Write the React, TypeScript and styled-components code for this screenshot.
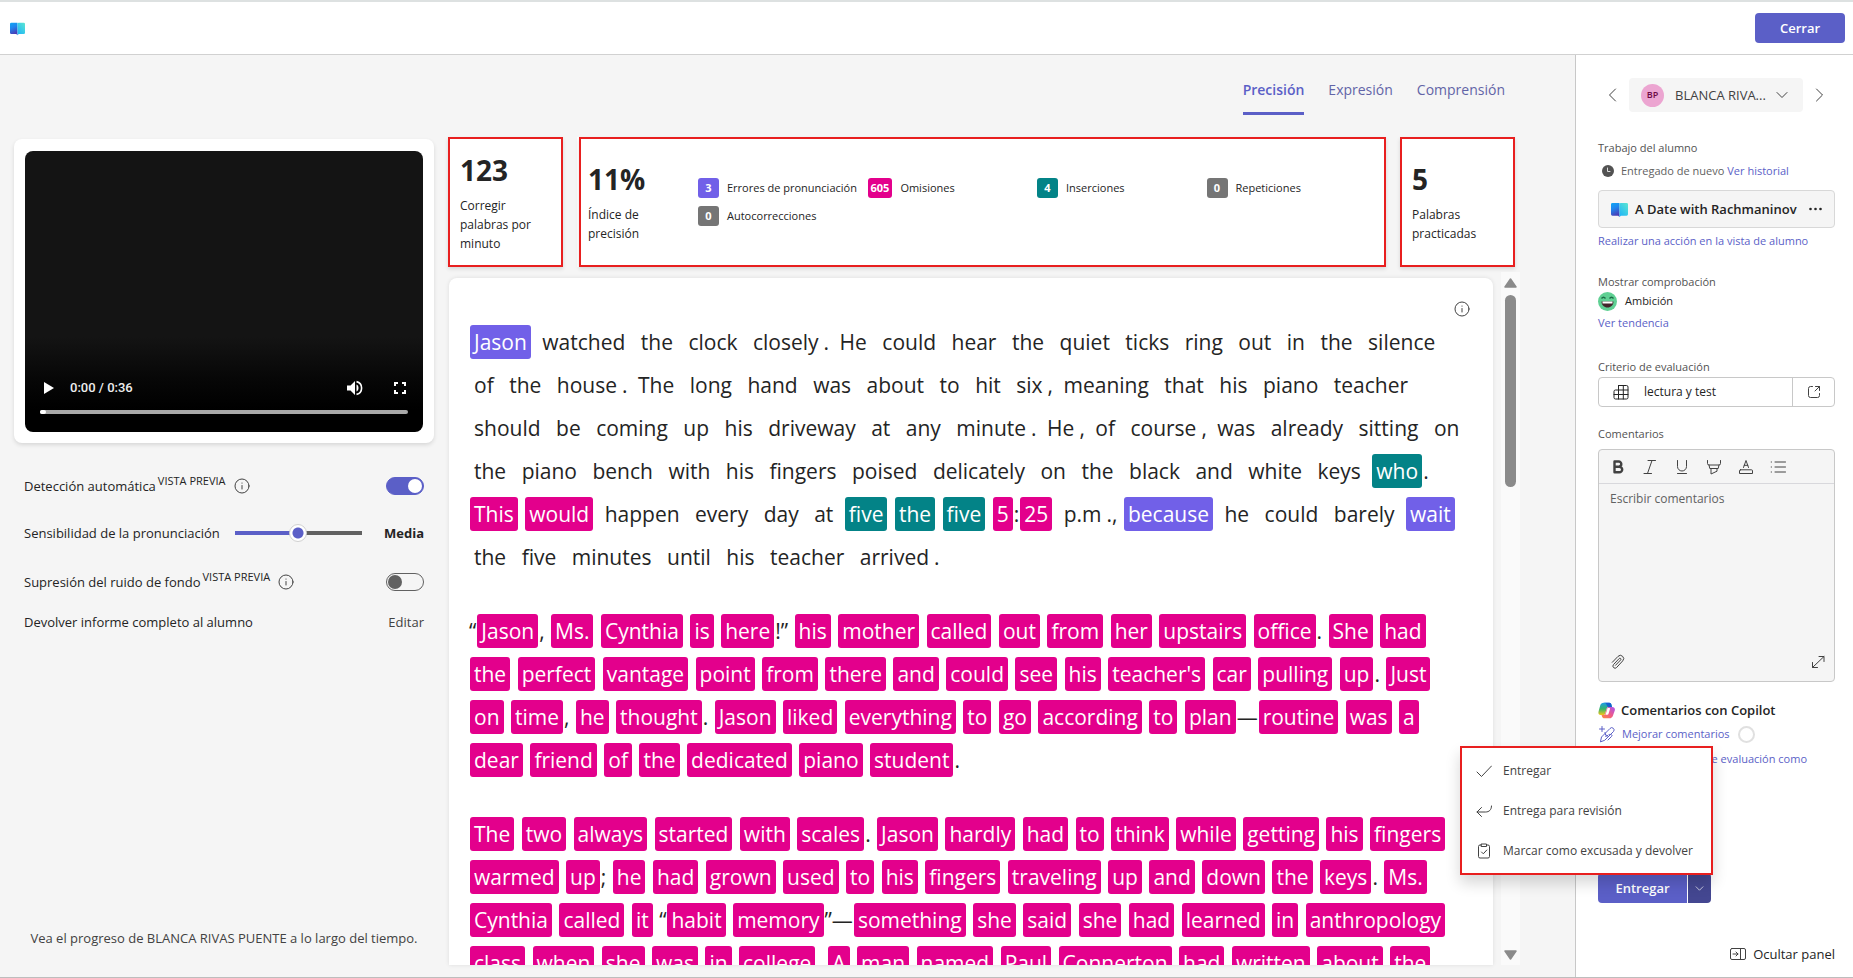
import React from "react";
import styled, { createGlobalStyle, css } from "styled-components";

const GlobalStyle = createGlobalStyle`
  *, *::before, *::after { box-sizing: border-box; }
  body {
    margin: 0;
    background: #f5f5f5;
    color: #242424;
    font-family: "Open Sans", "Noto Sans", sans-serif;
    font-size: 13px;
    line-height: 18px;
  }
  button, input, select, textarea { font: inherit; color: inherit; }
  button { border: 0; padding: 0; background: none; cursor: pointer; }
  a { color: #5b5fc7; text-decoration: none; }
  h2, p { margin: 0; font: inherit; }
  svg { display: block; flex: none; }
`;

const brand = "#5b5fc7";
const red = "#e81f1f";
const tones = { omission: "#e3008c", mispronounced: "#7160e8", insertion: "#038387", neutral: "#757575" };
type Tone = keyof typeof tones;

/* ---------- page frame ---------- */

const Page = styled.div`
  display: flex;
  flex-direction: column;
  height: 100vh;
  border-top: 2px solid #dde1e1;
  border-bottom: 1px solid #bdbdbd;
`;

const TopBar = styled.header`
  display: flex;
  flex: none;
  align-items: center;
  justify-content: space-between;
  height: 53px;
  padding: 0 8px 0 10px;
  background: #fff;
  border-bottom: 1px solid #d1d1d1;
`;

const PrimaryButton = styled.button`
  height: 30px;
  min-width: 90px;
  border-radius: 4px;
  background: ${brand};
  color: #fff;
  font-weight: 600;
`;

const Body = styled.div`
  display: flex;
  flex: 1;
  min-height: 0;
`;

const Main = styled.main`
  display: flex;
  flex: 1;
  flex-direction: column;
  min-width: 0;
  padding: 0 55px 12px 14px;
`;

const Tabs = styled.nav`
  display: flex;
  flex: none;
  justify-content: flex-end;
  gap: 24px;
  height: 81px;
  padding: 24px 15px 0 0;
`;

const Tab = styled.button<{ $active?: boolean }>`
  height: 36px;
  padding-bottom: 11px;
  border-bottom: 3px solid ${(p) => (p.$active ? brand : "transparent")};
  color: ${(p) => (p.$active ? brand : "#6264a7")};
  font-size: 14px;
  font-weight: ${(p) => (p.$active ? 600 : 400)};
`;

const Columns = styled.div`
  display: flex;
  flex: 1;
  gap: 14px;
  min-height: 0;
`;

/* ---------- player and settings ---------- */

const LeftColumn = styled.section`
  display: flex;
  flex: none;
  flex-direction: column;
  width: 420px;
  padding-top: 3px;
`;

const PlayerCard = styled.div`
  padding: 12px 11px 11px;
  border-radius: 8px;
  background: #fff;
  box-shadow: 0 2px 4px rgba(0, 0, 0, 0.12);
`;

const Player = styled.div`
  display: flex;
  flex-direction: column;
  justify-content: flex-end;
  height: 281px;
  padding: 0 15px 18px;
  border-radius: 8px;
  background: linear-gradient(#141414 0, #141414 66%, #060606 82%, #000 92%);
  color: #fff;
`;

const PlayerControls = styled.div`
  display: flex;
  align-items: center;
  height: 32px;
  margin-bottom: 6px;
  padding: 0 2px 0 4px;
  font-family: Roboto, sans-serif;
  font-size: 13px;
`;

const PlayerTime = styled.span`
  flex: 1;
  margin-left: 16px;
  font-weight: 500;
  color: #eee;
`;

const FullscreenButton = styled.button`
  margin-left: 31px;
`;

const ProgressTrack = styled.div`
  height: 4px;
  border-radius: 2px;
  background: #a9a9a9;
`;

const ProgressFill = styled.div`
  width: 6px;
  height: 4px;
  border-radius: 2px;
  background: #fff;
`;

const Settings = styled.div`
  flex: 1;
  padding: 20px 10px 0;
`;

const SettingRow = styled.div<{ $height: number }>`
  display: flex;
  align-items: center;
  justify-content: space-between;
  height: ${(p) => p.$height}px;
`;

const SettingLabel = styled.label`
  display: flex;
  align-items: center;
  font-weight: 500;
`;

const Preview = styled.span`
  margin: 0 8px 10px 2px;
  font-size: 11px;
  font-weight: 400;
`;

const Switch = styled.input`
  display: flex;
  align-items: center;
  width: 38px;
  height: 18px;
  margin: 0;
  padding: 0 1px;
  appearance: none;
  border: 1px solid #616161;
  border-radius: 9px;
  &::before {
    content: "";
    width: 14px;
    height: 14px;
    border-radius: 50%;
    background: #616161;
  }
  &:checked { justify-content: flex-end; background: ${brand}; border-color: ${brand}; }
  &:checked::before { background: #fff; }
`;

const SliderInput = styled.input`
  width: 127px;
  height: 20px;
  margin: 0 7px 0 0;
  appearance: none;
  background: linear-gradient(90deg, ${brand} 50%, #616161 50%) center / 100% 4px no-repeat;
  &::-webkit-slider-thumb {
    width: 18px;
    height: 18px;
    appearance: none;
    border: 1px solid #d1d1d1;
    border-radius: 50%;
    background: radial-gradient(circle, ${brand} 0 5px, #fff 6px);
  }
`;

const SliderValue = styled.output`
  font-weight: 700;
`;

const TextButton = styled.button`
  color: #424242;
`;

const ProgressNote = styled.p`
  padding-bottom: 18px;
  color: #424242;
  text-align: center;
`;

/* ---------- statistics ---------- */

const Center = styled.section`
  display: flex;
  flex: 1;
  flex-direction: column;
  min-width: 0;
`;

const Stats = styled.div`
  display: flex;
  flex: none;
  height: 136px;
  align-items: flex-start;
  justify-content: space-between;
  padding: 1px 5px 0 0;
`;

const StatCard = styled.div<{ $wide?: boolean }>`
  display: flex;
  align-items: center;
  flex: ${(p) => (p.$wide ? "1" : "none")};
  width: 115px;
  height: 130px;
  margin: ${(p) => (p.$wide ? "0 14px 0 16px" : "0")};
  padding: 0 ${(p) => (p.$wide ? 7 : 10)}px;
  border: 2px solid ${red};
  background: #fff;
  box-shadow: 0 2px 4px rgba(0, 0, 0, 0.12)${(p) => (p.$wide ? ", -2px 0 0 #fff" : "")};
`;

const Metric = styled.div`
  width: 84px;
  flex: none;
`;

const MetricValue = styled.div`
  margin-bottom: 8px;
  font-size: 28px;
  font-weight: 700;
  line-height: 36px;
`;

const MetricLabel = styled.div`
  font-size: 12px;
  line-height: 19px;
`;

const ErrorGrid = styled.div`
  display: grid;
  flex: 1;
  grid-template-columns: repeat(4, 1fr);
  row-gap: 8px;
  max-width: 678px;
  margin-left: 26px;
`;

const ErrorItem = styled.div`
  display: flex;
  align-items: center;
  gap: 8px;
  font-size: 11px;
  font-weight: 500;
  white-space: nowrap;
`;

const CountBadge = styled.span<{ $tone: Tone }>`
  min-width: 21px;
  height: 20px;
  padding: 0 3px;
  border-radius: 3px;
  background: ${(p) => tones[p.$tone]};
  color: #fff;
  font-weight: 700;
  line-height: 20px;
  text-align: center;
`;

/* ---------- reading passage ---------- */

const Reader = styled.div`
  display: flex;
  flex: 1;
  gap: 8px;
  min-height: 0;
`;

const Passage = styled.article`
  flex: 1;
  min-width: 0;
  margin: 6px 0 0 1px;
  padding: 23px 20px 0;
  overflow: hidden;
  border-radius: 8px 8px 0 0;
  background: #fff;
  box-shadow: 0 0 4px rgba(0, 0, 0, 0.1);
`;

const PassageTools = styled.div`
  display: flex;
  align-items: flex-start;
  justify-content: flex-end;
  height: 20px;
  padding-right: 3px;
`;

const Paragraph = styled.p`
  margin-bottom: 31px;
  font-size: 21px;
  line-height: 43px;
`;

const Line = styled.span`
  display: block;
  white-space: nowrap;
`;

const Word = styled.span<{ $tone?: Tone }>`
  margin: 0 1px;
  padding: 3px 4px;
  border-radius: 3px;
  ${(p) => p.$tone && css`
    background: ${tones[p.$tone]};
    color: #fff;
  `}
`;

const Scrollbar = styled.div`
  display: flex;
  flex: none;
  flex-direction: column;
  align-items: center;
  justify-content: space-between;
  width: 19px;
  padding: 6px 0 5px;
  background: #fafafa;
`;

const ScrollTrack = styled.div`
  flex: 1;
  padding-top: 7px;
`;

const ScrollThumb = styled.div`
  width: 11px;
  height: 192px;
  border-radius: 6px;
  background: #8b8b8b;
`;

/* ---------- grading panel ---------- */

const Panel = styled.aside`
  display: flex;
  flex: none;
  flex-direction: column;
  width: 278px;
  padding: 23px 18px 14px 22px;
  border-left: 1px solid #c8c8c8;
  background: #fff;
`;

const StudentNav = styled.div`
  display: flex;
  flex: none;
  align-items: center;
  height: 34px;
  padding: 0 8px 0 7px;
  gap: 8px;
`;

const StudentPicker = styled.label`
  display: flex;
  flex: 1;
  align-items: center;
  height: 34px;
  padding: 0 13px 0 12px;
  border-radius: 4px;
  background: #f5f5f5;
`;

const Avatar = styled.span`
  flex: none;
  width: 23px;
  height: 23px;
  margin-right: 11px;
  border-radius: 50%;
  background: #eca5d1;
  color: #6e0845;
  font-size: 9px;
  font-weight: 600;
  line-height: 22px;
  text-align: center;
`;

const StudentSelect = styled.select`
  flex: 1;
  min-width: 0;
  padding: 0;
  appearance: none;
  border: 0;
  background: none;
  color: #424242;
`;

const Group = styled.section<{ $top: number }>`
  display: flex;
  flex: none;
  flex-direction: column;
  margin-top: ${(p) => p.$top}px;
  font-size: 11px;
`;

const GroupTitle = styled.h2`
  color: #525252;
  font-weight: 500;
  line-height: 18px;
`;

const InlineRow = styled.div<{ $height: number; $gap: number }>`
  display: flex;
  align-items: center;
  gap: ${(p) => p.$gap}px;
  height: ${(p) => p.$height}px;
`;

const Muted = styled.span`
  color: #616161;
`;

const WorkItem = styled.div`
  display: flex;
  align-items: center;
  height: 38px;
  margin: 5px 0 4px;
  padding: 0 12px;
  border: 1px solid #d8d8d8;
  border-radius: 4px;
  background: #f5f5f5;
`;

const WorkTitle = styled.span`
  flex: 1;
  margin-left: 7px;
  font-size: 13px;
  font-weight: 600;
  white-space: nowrap;
`;

const Rubric = styled.div`
  display: flex;
  height: 30px;
  margin-top: 1px;
  border: 1px solid #c8c8c8;
  border-radius: 4px;
`;

const RubricName = styled.button`
  display: flex;
  flex: 1;
  align-items: center;
  gap: 15px;
  padding-left: 14px;
  font-size: 12px;
`;

const RubricOpen = styled.button`
  display: grid;
  place-items: center;
  width: 42px;
  border-left: 1px solid #c8c8c8;
`;

const Editor = styled.div`
  display: flex;
  flex-direction: column;
  height: 233px;
  margin-top: 6px;
  border: 1px solid #c8c8c8;
  border-radius: 4px;
  background: #f5f5f5;
`;

const EditorTools = styled.div`
  display: flex;
  flex: none;
  align-items: center;
  gap: 16px;
  height: 34px;
  padding-left: 11px;
  border-bottom: 1px solid #d8d8dc;
`;

const EditorInput = styled.textarea`
  flex: 1;
  min-height: 0;
  padding: 6px 11px;
  border: 0;
  background: none;
  font-size: 12px;
  resize: none;
  &::placeholder { color: #616161; opacity: 1; }
`;

const EditorFooter = styled.div`
  display: flex;
  justify-content: space-between;
  padding: 0 8px 11px 10px;
`;

const CopilotTitle = styled.h2`
  font-size: 13px;
  font-weight: 600;
`;

const Ring = styled.span`
  width: 17px;
  height: 17px;
  margin-left: 2px;
  border: 2px solid #e0e0e0;
  border-radius: 50%;
`;

const RubricLink = styled.a`
  padding: 4px 28px 0 0;
  text-align: right;
`;

const Submit = styled.div`
  position: relative;
  display: flex;
  align-self: flex-start;
  gap: 1px;
  margin: auto 0 42px;
  border-radius: 4px;
`;

const SubmitButton = styled(PrimaryButton)`
  min-width: 89px;
  border-radius: 4px 0 0 4px;
`;

const SubmitToggle = styled.button`
  display: grid;
  place-items: center;
  width: 23px;
  border-radius: 0 4px 4px 0;
  background: #444791;
  color: #fff;
`;

const Menu = styled.div`
  position: absolute;
  right: -2px;
  bottom: 28px;
  display: flex;
  flex-direction: column;
  width: 253px;
  padding: 3px 0 2px;
  border: 2px solid ${red};
  background: #fff;
  box-shadow: 0 8px 14px rgba(0, 0, 0, 0.16);
`;

const MenuItem = styled.button`
  display: flex;
  align-items: center;
  gap: 11px;
  height: 40px;
  padding-left: 14px;
  color: #424242;
  font-size: 12px;
  white-space: nowrap;
`;

const HidePanel = styled.button`
  display: flex;
  align-items: center;
  align-self: flex-end;
  gap: 7px;
  font-weight: 500;
`;

/* ---------- icons ---------- */

type StrokeProps = { size?: number; box?: number; color?: string; width?: number; children: React.ReactNode };

const Stroke = ({ size = 16, box = 16, color = "#424242", width = 1, children }: StrokeProps) => (
  <svg width={size} height={size} viewBox={`0 0 ${box} ${box}`} fill="none" stroke={color} strokeWidth={width}
    strokeLinecap="round" strokeLinejoin="round" aria-hidden="true">{children}</svg>
);

const BookIcon = ({ size, id }: { size: number; id: string }) => (
  <svg width={size} height={size} viewBox="0 0 18 18" aria-hidden="true">
    <defs>
      <linearGradient id={`${id}l`} x1="0" y1="0" x2="0.3" y2="1">
        <stop offset="0" stopColor="#0fa8f5" /><stop offset="0.45" stopColor="#1f86ee" /><stop offset="1" stopColor="#4a3cb5" />
      </linearGradient>
      <linearGradient id={`${id}r`} x1="1" y1="0" x2="0.3" y2="1">
        <stop offset="0" stopColor="#5ce6d2" /><stop offset="1" stopColor="#22b8f5" />
      </linearGradient>
    </defs>
    <path d="M1.500 2h7.500v15l-1.500-1.500H1.500A1.500 1.500 0 0 1 0 14V3.500A1.500 1.500 0 0 1 1.500 2z" fill={`url(#${id}l)`} />
    <path d="M10.500 2h6A1.500 1.500 0 0 1 18 3.500V14a1.500 1.500 0 0 1-1.500 1.500h-6L9 17V3.500A1.500 1.500 0 0 1 10.500 2z" fill={`url(#${id}r)`} />
  </svg>
);

const InfoIcon = () => (
  <Stroke color="#424242"><circle cx="8" cy="8" r="7" /><path d="M8 7.500v3.500M8 5v0.200" /></Stroke>
);

const CopilotIcon = () => (
  <svg width="17" height="17" viewBox="0 0 24 24" aria-hidden="true">
    <defs>
      <linearGradient id="cpa" x1="0" y1="0" x2="0" y2="1"><stop offset="0" stopColor="#1c9de8" /><stop offset="0.5" stopColor="#35b56a" /><stop offset="1" stopColor="#f5c518" /></linearGradient>
      <linearGradient id="cpb" x1="1" y1="0" x2="0" y2="1"><stop offset="0" stopColor="#a854f0" /><stop offset="0.5" stopColor="#ee5a8a" /><stop offset="1" stopColor="#ff8a3c" /></linearGradient>
    </defs>
    <path d="M8 1h8c1.600 0 2.400 1 2.900 2.500L19.800 7H15c-1.500 0-2.300.9-2.700 2.300l-2 6.700c-.5 1.600-1.400 2.500-3 2.500H4C1 18.500 0 16.500.8 13.500l2.400-9C3.900 2.200 5.500 1 8 1z" fill="url(#cpa)" />
    <path d="M8 1h8c1.600 0 2.400 1 2.900 2.500L19.800 7H15c-1.500 0-2.100-.7-2.500-2L12 3.500C11.500 2 10.500 1 8 1z" fill="#1660d0" />
    <path d="M16 23H9c-1.800 0-2.800-.9-3.300-2.600L5 18.500h2.400c1.600 0 2.500-.9 3-2.500l2-6.700C12.800 7.900 13.600 7 15 7h5c3 0 4.500 2 3.700 5l-2.500 7c-.9 2.600-2.400 4-5.200 4z" fill="url(#cpb)" />
    <path d="M13.500 8.500h2.200c1 0 1.400.7 1.100 1.600l-1.800 6c-.4 1.400-1.200 2-2.600 2h-2.100c.5-.5.800-1.300 1-2.100z" fill="#fff" />
  </svg>
);

const Chevron = ({ d, size = 16, color = "#424242" }: { d: string; size?: number; color?: string }) => (
  <Stroke size={size} color={color}><path d={d} /></Stroke>
);

/* ---------- data ---------- */

const errors: { tone: Tone; count: number; label: string }[] = [
  { tone: "mispronounced", count: 3, label: "Errores de pronunciación" },
  { tone: "omission", count: 605, label: "Omisiones" },
  { tone: "insertion", count: 4, label: "Inserciones" },
  { tone: "neutral", count: 0, label: "Repeticiones" },
  { tone: "neutral", count: 0, label: "Autocorrecciones" },
];

// Word marks: *omission*, +mispronunciation+, ~insertion~.
const markTone: Record<string, Tone> = { "*": "omission", "+": "mispronounced", "~": "insertion" };

const paragraphs = [
  [
    "+Jason+ watched the clock closely. He could hear the quiet ticks ring out in the silence",
    "of the house. The long hand was about to hit six, meaning that his piano teacher",
    "should be coming up his driveway at any minute. He, of course, was already sitting on",
    "the piano bench with his fingers poised delicately on the black and white keys ~who~.",
    "*This* *would* happen every day at ~five~ ~the~ ~five~ *5*:*25* p.m., +because+ he could barely +wait+",
    "the five minutes until his teacher arrived.",
  ],
  [
    "“*Jason*, *Ms.* *Cynthia* *is* *here*!” *his* *mother* *called* *out* *from* *her* *upstairs* *office*. *She* *had*",
    "*the* *perfect* *vantage* *point* *from* *there* *and* *could* *see* *his* *teacher's* *car* *pulling* *up*. *Just*",
    "*on* *time*, *he* *thought*. *Jason* *liked* *everything* *to* *go* *according* *to* *plan*—*routine* *was* *a*",
    "*dear* *friend* *of* *the* *dedicated* *piano* *student*.",
  ],
  [
    "*The* *two* *always* *started* *with* *scales*. *Jason* *hardly* *had* *to* *think* *while* *getting* *his* *fingers*",
    "*warmed* *up*; *he* *had* *grown* *used* *to* *his* *fingers* *traveling* *up* *and* *down* *the* *keys*. *Ms.*",
    "*Cynthia* *called* *it* “*habit* *memory*”—*something* *she* *said* *she* *had* *learned* *in* *anthropology*",
    "*class* *when* *she* *was* *in* *college*. *A* *man* *named* *Paul* *Connerton* *had* *written* *about* *the*",
  ],
];

const segmentPattern = /([*+~])(.+?)\1|[A-Za-z]+(?:\.[A-Za-z]+)*|[^A-Za-z*+~]+/g;

const MarkedLine = ({ text }: { text: string }) => (
  <Line>
    {[...text.matchAll(segmentPattern)].map((m, i) => {
      if (m[1]) return <Word key={i} $tone={markTone[m[1]]}>{m[2]}</Word>;
      if (/^[A-Za-z]/.test(m[0])) return <Word key={i}>{m[0]}</Word>;
      return m[0];
    })}
  </Line>
);

/* ---------- sections ---------- */

const PlayerSection = () => (
  <PlayerCard>
    <Player>
      <PlayerControls>
        <button aria-label="Reproducir">
          <svg width="10" height="12" viewBox="0 0 10 12"><path d="M0 0l10 6-10 6z" fill="#fff" /></svg>
        </button>
        <PlayerTime>0:00 / 0:36</PlayerTime>
        <button aria-label="Volumen">
          <svg width="16" height="16" viewBox="0 0 16 16">
            <path d="M0 5.500h3.500L8 1v14l-4.500-4.500H0z" fill="#fff" />
            <path d="M9.500 4.500c1.300.6 2 1.900 2 3.500s-.7 2.900-2 3.500z" fill="#fff" />
            <path d="M9.500 1.600C12.500 2.300 14.600 4.900 14.600 8s-2.100 5.700-5.100 6.400" fill="none" stroke="#fff" strokeWidth="1.600" />
          </svg>
        </button>
        <FullscreenButton aria-label="Pantalla completa">
          <svg width="12" height="12" viewBox="0 0 12 12" fill="none" stroke="#fff" strokeWidth="2">
            <path d="M1 4V1h3M8 1h3v3M11 8v3H8M4 11H1V8" />
          </svg>
        </FullscreenButton>
      </PlayerControls>
      <ProgressTrack><ProgressFill /></ProgressTrack>
    </Player>
  </PlayerCard>
);

const SettingsSection = () => (
  <Settings>
    <SettingRow $height={46}>
      <SettingLabel htmlFor="auto">Detección automática <Preview>VISTA PREVIA</Preview><InfoIcon /></SettingLabel>
      <Switch id="auto" type="checkbox" defaultChecked />
    </SettingRow>
    <SettingRow $height={48}>
      <SettingLabel htmlFor="sens">Sensibilidad de la pronunciación</SettingLabel>
      <SliderInput id="sens" type="range" min="0" max="2" defaultValue="1" />
      <SliderValue htmlFor="sens">Media</SliderValue>
    </SettingRow>
    <SettingRow $height={50}>
      <SettingLabel htmlFor="noise">Supresión del ruido de fondo <Preview>VISTA PREVIA</Preview><InfoIcon /></SettingLabel>
      <Switch id="noise" type="checkbox" />
    </SettingRow>
    <SettingRow $height={30}>
      <SettingLabel as="span">Devolver informe completo al alumno</SettingLabel>
      <TextButton>Editar</TextButton>
    </SettingRow>
  </Settings>
);

const StatsSection = () => (
  <Stats>
    <StatCard>
      <Metric><MetricValue>123</MetricValue><MetricLabel>Corregir palabras por minuto</MetricLabel></Metric>
    </StatCard>
    <StatCard $wide>
      <Metric><MetricValue>11%</MetricValue><MetricLabel>Índice de precisión</MetricLabel></Metric>
      <ErrorGrid>
        {errors.map((e) => (
          <ErrorItem key={e.label}><CountBadge $tone={e.tone}>{e.count}</CountBadge>{e.label}</ErrorItem>
        ))}
      </ErrorGrid>
    </StatCard>
    <StatCard>
      <Metric><MetricValue>5</MetricValue><MetricLabel>Palabras practicadas</MetricLabel></Metric>
    </StatCard>
  </Stats>
);

const ReaderSection = () => (
  <Reader>
    <Passage>
      <PassageTools><button aria-label="Información"><InfoIcon /></button></PassageTools>
      {paragraphs.map((lines, i) => (
        <Paragraph key={i}>{lines.map((l) => <MarkedLine key={l} text={l} />)}</Paragraph>
      ))}
    </Passage>
    <Scrollbar aria-hidden="true">
      <svg width="13" height="10" viewBox="0 0 13 10"><path d="M6.500 1L12 9H1z" fill="#8b8b8b" stroke="#8b8b8b" strokeLinejoin="round" strokeWidth="1.500" /></svg>
      <ScrollTrack><ScrollThumb /></ScrollTrack>
      <svg width="13" height="10" viewBox="0 0 13 10"><path d="M6.500 9L12 1H1z" fill="#8b8b8b" stroke="#8b8b8b" strokeLinejoin="round" strokeWidth="1.500" /></svg>
    </Scrollbar>
  </Reader>
);

const EditorTool = ({ label, children }: { label: string; children: React.ReactNode }) => (
  <button aria-label={label}><Stroke>{children}</Stroke></button>
);

const CommentEditor = () => (
  <Editor>
    <EditorTools>
      <EditorTool label="Negrita"><path d="M4.500 2.500h4.200a2.600 2.600 0 0 1 0 5.200H4.500zM4.500 7.700h4.900a2.800 2.800 0 0 1 0 5.600H4.500z" strokeWidth="2.400" /></EditorTool>
      <EditorTool label="Cursiva"><path d="M6 1.500h7.500M2 14.500h7.500M10 1.500l-4.500 13" /></EditorTool>
      <EditorTool label="Subrayado"><path d="M3.500 1.500v6a4.500 4.500 0 0 0 9 0v-6M3.500 14.500h9" /></EditorTool>
      <EditorTool label="Resaltar"><path d="M1.500 1.500v3a1.500 1.500 0 0 0 1.500 1.500h10a1.500 1.500 0 0 0 1.500-1.500v-3M3 6l.8 3.500h8.400L13 6M5 9.500v5.500l6-2.800V9.500" /></EditorTool>
      <EditorTool label="Color de fuente"><path d="M5.500 8.500L8 1.500l2.500 7M6.200 6.300h3.600M2.500 10.800h11a1 1 0 0 1 1 1v2.700h-13v-2.700a1 1 0 0 1 1-1z" /></EditorTool>
      <EditorTool label="Lista"><path d="M5 3h10.500M5 8h10.500M5 13h10.500M1.200 3h.3M1.200 8h.3M1.200 13h.3" /></EditorTool>
    </EditorTools>
    <EditorInput id="comments" placeholder="Escribir comentarios" />
    <EditorFooter>
      <button aria-label="Adjuntar">
        <Stroke><path d="M1.800 8.300l5.700-5.900a3.200 3.200 0 0 1 4.700 4.500l-6.100 6.600a2.100 2.100 0 0 1-3.100-2.900l5.700-6.100a1 1 0 0 1 1.500 1.400L5 11.300" transform="translate(1.500 0)" /></Stroke>
      </button>
      <button aria-label="Expandir">
        <Stroke><path d="M9 2.500h5v5M14 2.500L2.500 13.500M2.500 8.500v5h5" /></Stroke>
      </button>
    </EditorFooter>
  </Editor>
);

const GradingPanel = () => (
  <Panel>
    <StudentNav>
      <button aria-label="Alumno anterior"><Chevron d="M10.500 2L4.500 8l6 6" /></button>
      <StudentPicker>
        <Avatar>BP</Avatar>
        <StudentSelect aria-label="Alumno"><option>BLANCA RIVA...</option></StudentSelect>
        <Chevron d="M3 5.500l5 5 5-5" />
      </StudentPicker>
      <button aria-label="Alumno siguiente"><Chevron d="M5.500 2l6 6-6 6" /></button>
    </StudentNav>

    <Group $top={27}>
      <GroupTitle>Trabajo del alumno</GroupTitle>
      <InlineRow $height={28} $gap={3}>
        <Stroke size={20} box={20} color="#525252"><circle cx="10" cy="10" r="6" fill="#525252" stroke="none" /><path d="M9.500 7v3.500h2.500" stroke="#ddd" /></Stroke>
        <Muted>Entregado de nuevo</Muted><a href="#historial">Ver historial</a>
      </InlineRow>
      <WorkItem>
        <BookIcon size={17} id="work" />
        <WorkTitle>A Date with Rachmaninov</WorkTitle>
        <button aria-label="Más opciones">
          <svg width="13" height="4" viewBox="0 0 13 4" fill="#242424"><circle cx="1.500" cy="2" r="1.300" /><circle cx="6.500" cy="2" r="1.300" /><circle cx="11.500" cy="2" r="1.300" /></svg>
        </button>
      </WorkItem>
      <a href="#vista">Realizar una acción en la vista de alumno</a>
    </Group>

    <Group $top={23}>
      <GroupTitle>Mostrar comprobación</GroupTitle>
      <InlineRow $height={20} $gap={8}>
        <svg width="19" height="19" viewBox="0 0 19 19" aria-hidden="true">
          <circle cx="9.500" cy="9.500" r="9.500" fill="#5fd093" />
          <path d="M3.500 6.500q2-2.500 4 0M11.500 6.500q2-2.500 4 0" fill="none" stroke="#1d6b46" strokeWidth="1.400" />
          <path d="M3.500 9.500h12c0 3.500-2.600 6-6 6s-6-2.500-6-6z" fill="#43262b" />
          <path d="M4.500 9.500h10v2h-10z" fill="#fff" />
        </svg>
        <span>Ambición</span>
      </InlineRow>
      <InlineRow $height={24} $gap={0}><a href="#tendencia">Ver tendencia</a></InlineRow>
    </Group>

    <Group $top={23}>
      <GroupTitle>Criterio de evaluación</GroupTitle>
      <Rubric>
        <RubricName>
          <Stroke color="#242424"><path d="M5.500 1.500h8a1.500 1.500 0 0 1 1.500 1.500v10.500a1.500 1.500 0 0 1-1.500 1.500H2.500A1.500 1.500 0 0 1 1 13.500V7.500A1.500 1.500 0 0 1 2.500 6H15M5.500 1.500V15M10.300 1.500V15M1 10.500h14" /></Stroke>
          lectura y test
        </RubricName>
        <RubricOpen aria-label="Abrir criterio">
          <Stroke><path d="M6.500 2.500h-2a2 2 0 0 0-2 2v7a2 2 0 0 0 2 2h7a2 2 0 0 0 2-2v-2M9.500 2.500h4v4M13.500 2.500L9 7" /></Stroke>
        </RubricOpen>
      </Rubric>
    </Group>

    <Group $top={18}>
      <GroupTitle as="label" htmlFor="comments">Comentarios</GroupTitle>
      <CommentEditor />
    </Group>

    <Group $top={16}>
      <InlineRow $height={24} $gap={6}><CopilotIcon /><CopilotTitle>Comentarios con Copilot</CopilotTitle></InlineRow>
      <InlineRow $height={24} $gap={6}>
        <Stroke size={18} box={18} color={brand}>
          <path d="M4 1.500v5M1.500 4h5M7 7.500l.6 2.600 2.400.6-2.400.6" />
          <path d="M2.500 16.500l1-4.500L12 3.500a2.200 2.200 0 0 1 3.500 3L7 15zM11 9.500c2-.5 4 .5 2.500 2L10 15" />
        </Stroke>
        <a href="#mejorar">Mejorar comentarios</a><Ring />
      </InlineRow>
      <RubricLink href="#criterio">de evaluación como</RubricLink>
    </Group>

    <Submit>
      <SubmitButton>Entregar</SubmitButton>
      <SubmitToggle aria-label="Más opciones de entrega"><Chevron d="M3 5.500l5 5 5-5" size={11} color="#fff" /></SubmitToggle>
      <Menu role="menu">
        <MenuItem role="menuitem"><Stroke><path d="M1 9l4.500 4.500L15.500 3" /></Stroke>Entregar</MenuItem>
        <MenuItem role="menuitem"><Stroke><path d="M15.500 3c0 4-2.500 6-6 6H1M5.500 4.500L1 9l4.500 4.500" /></Stroke>Entrega para revisión</MenuItem>
        <MenuItem role="menuitem">
          <Stroke><path d="M5.500 2H4a1.500 1.500 0 0 0-1.500 1.500v10A1.500 1.500 0 0 0 4 15h8a1.500 1.500 0 0 0 1.500-1.500v-10A1.500 1.500 0 0 0 12 2h-1.500M5.500 1h5v2.500h-5zM5.500 9l1.800 1.800L10.800 7" /></Stroke>
          Marcar como excusada y devolver
        </MenuItem>
      </Menu>
    </Submit>

    <HidePanel>
      <Stroke><rect x="0.500" y="2.500" width="15" height="11" rx="1.500" /><path d="M10.500 2.500v11M3 8h5M6 6l2 2-2 2" /></Stroke>
      Ocultar panel
    </HidePanel>
  </Panel>
);

export default function App() {
  return (
    <>
      <GlobalStyle />
      <Page>
        <TopBar>
          <BookIcon size={15} id="top" />
          <PrimaryButton>Cerrar</PrimaryButton>
        </TopBar>
        <Body>
          <Main>
            <Tabs>
              <Tab $active>Precisión</Tab>
              <Tab>Expresión</Tab>
              <Tab>Comprensión</Tab>
            </Tabs>
            <Columns>
              <LeftColumn>
                <PlayerSection />
                <SettingsSection />
                <ProgressNote>Vea el progreso de BLANCA RIVAS PUENTE a lo largo del tiempo.</ProgressNote>
              </LeftColumn>
              <Center>
                <StatsSection />
                <ReaderSection />
              </Center>
            </Columns>
          </Main>
          <GradingPanel />
        </Body>
      </Page>
    </>
  );
}
